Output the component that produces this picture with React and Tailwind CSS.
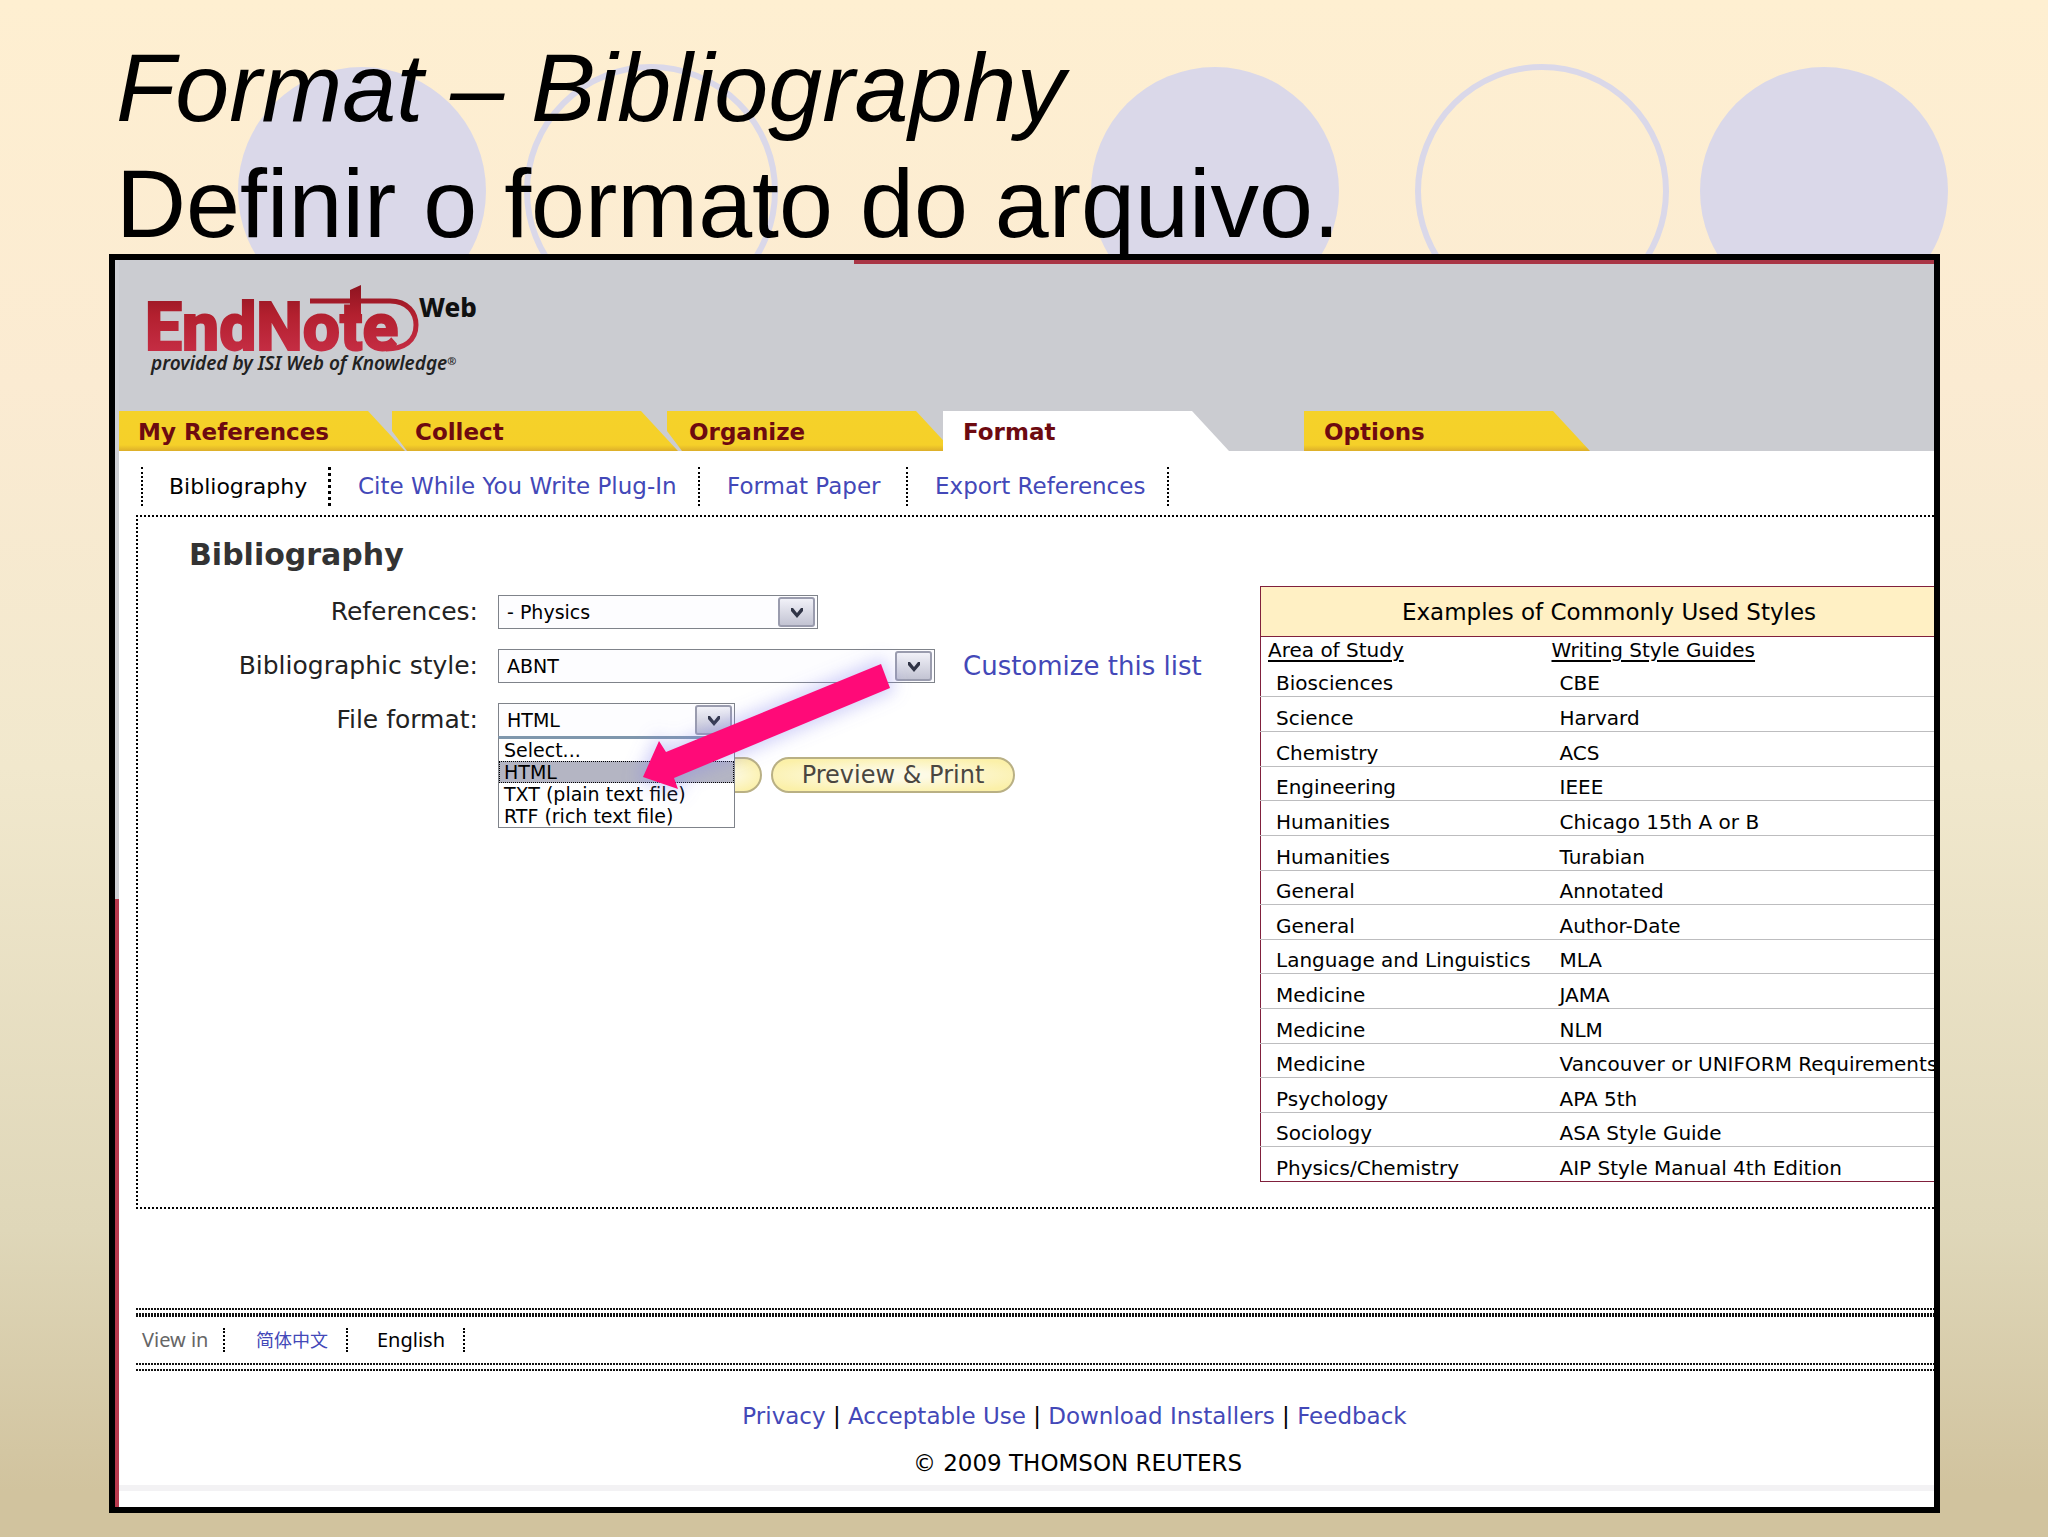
import React from "react";

const tabs = [
  { label: "My References", cls: "pl-[19px] [clip-path:polygon(0_0,249px_0,286px_100%,0_100%)]" },
  { label: "Collect", cls: "-ml-[13px] pl-[23px] [clip-path:polygon(0_0,249px_0,286px_100%,15px_100%,0_50%)]" },
  { label: "Organize", cls: "-ml-[11px] pl-[22px] [clip-path:polygon(0_0,249px_0,286px_100%,15px_100%,0_50%)]" },
  { label: "Format", active: true, cls: "-ml-[10px] pl-[20px] [clip-path:polygon(0_0,249px_0,286px_100%,0_100%)]" },
  { label: "Options", cls: "ml-[75px] pl-[20px] [clip-path:polygon(0_0,249px_0,286px_100%,0_100%)]" },
];

const styles = [
  ["Biosciences", "CBE"],
  ["Science", "Harvard"],
  ["Chemistry", "ACS"],
  ["Engineering", "IEEE"],
  ["Humanities", "Chicago 15th A or B"],
  ["Humanities", "Turabian"],
  ["General", "Annotated"],
  ["General", "Author-Date"],
  ["Language and Linguistics", "MLA"],
  ["Medicine", "JAMA"],
  ["Medicine", "NLM"],
  ["Medicine", "Vancouver or UNIFORM Requirements"],
  ["Psychology", "APA 5th"],
  ["Sociology", "ASA Style Guide"],
  ["Physics/Chemistry", "AIP Style Manual 4th Edition"],
];

const fileFormats = ["Select...", "HTML", "TXT (plain text file)", "RTF (rich text file)"];

function Circles() {
  return (
    <svg className="absolute left-0 top-0 h-[320px] w-full" viewBox="0 0 2048 320" preserveAspectRatio="xMinYMin slice" aria-hidden="true">
      <g fill="#dad8e9">
        <circle cx="362" cy="191" r="124" />
        <circle cx="1215" cy="191" r="124" />
        <circle cx="1824" cy="191" r="124" />
      </g>
      <g fill="none" stroke="#dad8e9" strokeWidth="6">
        <circle cx="651" cy="191" r="124" />
        <circle cx="1542" cy="191" r="124" />
      </g>
    </svg>
  );
}

function Logo() {
  return (
    <svg className="block" width="350" height="110" viewBox="140 280 350 110" role="img" aria-label="EndNote Web">
      <defs>
        <linearGradient id="red" x1="0" y1="285" x2="0" y2="352" gradientUnits="userSpaceOnUse">
          <stop offset="0" stopColor="#8e1420" />
          <stop offset="0.45" stopColor="#b3202f" />
          <stop offset="1" stopColor="#c52d44" />
        </linearGradient>
      </defs>
      <text x="145" y="350" fontFamily="Roboto,'Liberation Sans',sans-serif" fontWeight="800" fontSize="66" fill="url(#red)" stroke="url(#red)" strokeWidth="2">
        EndNote
      </text>
      <g fill="none" stroke="url(#red)">
        <path d="M310 301H390C408 301 416 313 416 325C416 341 404 349 386 349" strokeWidth="5" />
        <path d="M350 290L361 285V318H350Z" fill="url(#red)" stroke="none" />
      </g>
      <text x="419" y="317" fontFamily="'Noto Sans',sans-serif" fontWeight="800" fontSize="26" fill="#111">Web</text>
      <text x="151" y="370" fontFamily="'Noto Sans',sans-serif" fontWeight="600" fontStyle="italic" fontSize="19" fill="#222">
        provided by ISI Web of Knowledge<tspan fontSize="11" dy="-5">®</tspan>
      </text>
    </svg>
  );
}

function Select({ id, value, width, children }) {
  return (
    <div className={"relative " + width}>
      <select
        id={id}
        defaultValue={value}
        className="block h-[34px] w-full appearance-none border border-[#7f838a] bg-[#fdfdff] pl-2 text-[19px] leading-[32px] text-black"
      >
        <option>{value}</option>
      </select>
      <span className="pointer-events-none absolute right-[3px] top-[2px] flex h-[30px] w-[37px] items-center justify-center rounded-[3px] border-2 border-[#9a9cae] bg-linear-to-b from-[#f1f1f8] to-[#c3c4d3]">
        <svg width="14" height="11" viewBox="0 0 14 11" aria-hidden="true">
          <path d="M1 1V4L7 11L13 4V1H11L7 6L3 1Z" fill="#303446" />
        </svg>
      </span>
      {children}
    </div>
  );
}

function Rule({ className }) {
  return <div className={"bg-[repeating-linear-gradient(90deg,#111_0_2px,transparent_2px_3px)] " + className} />;
}

function Arrow() {
  return (
    <svg className="pointer-events-none absolute left-[461px] top-[123px] z-20" width="320" height="180" viewBox="0 0 320 180" aria-hidden="true">
      <defs>
        <filter id="glow" x="-20%" y="-20%" width="140%" height="150%">
          <feGaussianBlur stdDeviation="8" />
        </filter>
      </defs>
      <path d="M44 137L60 101L67 112L282 24L291 48L75 138L79 149Z" fill="#8080f0" fillOpacity="0.3" stroke="#8080f0" strokeOpacity="0.2" strokeWidth="14" strokeLinejoin="round" filter="url(#glow)" />
      <path d="M44 137L60 101L67 112L282 24L291 48L75 138L79 149Z" fill="#ff0a78" />
    </svg>
  );
}

const link = "text-[#4348b8]";
const pill =
  "h-[36px] rounded-full border-2 border-[#b9b084] bg-[radial-gradient(ellipse_at_center,#fdfae6_20%,#fbf0a8_85%)] text-[24px] leading-[32px] text-[#4a4640]";
const navItem = "flex h-[39px] items-center border-r-2 border-dotted border-black px-[27px]";

export default function App() {
  return (
    <div className="relative min-h-screen overflow-hidden bg-[linear-gradient(180deg,#feefd1_0%,#fbebd2_25%,#f1e8cd_50%,#dfd7b9_80%,#d1c39e_97%)] pb-6 font-['DejaVu_Sans','Noto_Sans_CJK_SC',sans-serif] text-black">
      <Circles />
      <h1 className="relative -mb-[8px] pl-[116px] pt-[30px] font-['Liberation_Sans',sans-serif] text-[97px] leading-[116px]">
        <em>Format – Bibliography</em>
        <br />
        Definir o formato do arquivo.
      </h1>

      <main className="relative ml-[109px] mr-[108px] flex overflow-hidden border-6 border-black bg-white">
        <div className="flex w-1 shrink-0 flex-col">
          <div className="h-[639px] bg-[#cfd0d5]" />
          <div className="flex-1 bg-[#b83a4e]" />
        </div>
        <div className="min-w-0 flex-1">
          <header className="bg-[#cbccd1]">
            <div className="ml-[735px] h-1 bg-[#a93545]" />
            <div className="h-[147px] pl-[21px] pt-[16px]">
              <Logo />
            </div>
            <nav className="flex" aria-label="Main">
              {tabs.map((t) => (
                <button
                  key={t.label}
                  className={
                    "h-10 w-[286px] shrink-0 text-left text-[23px] font-bold leading-[42px] text-[#6d0a10] " +
                    (t.active ? "relative bg-white " : "bg-[linear-gradient(180deg,#f5d229_0%,#f5d029_85%,#dcae2a_100%)] ") +
                    t.cls
                  }
                >
                  {t.label}
                </button>
              ))}
            </nav>
          </header>

          <nav className="ml-[22px] mt-4 flex whitespace-nowrap border-l-2 border-dotted border-black text-[23px]" aria-label="Format">
            <span className="flex h-[39px] w-[188px] items-center border-r-3 border-dotted border-black pl-[26px] text-[22px]">Bibliography</span>
            <a href="#cite" className={navItem + " w-[369px] " + link}>Cite While You Write Plug-In</a>
            <a href="#paper" className={navItem + " w-[208px] " + link}>Format Paper</a>
            <a href="#export" className={navItem + " w-[261px] " + link}>Export References</a>
          </nav>

          <section className="ml-[17px] mt-[9px] flex border-y-2 border-l-2 border-dotted border-black pb-[25px]">
            <form className="relative min-w-0 flex-1 text-[25px]" onSubmit={(e) => e.preventDefault()}>
              <h2 className="mb-5 mt-[18px] pl-[51px] text-[30px] font-bold leading-10 text-[#333]">Bibliography</h2>
              <div className="grid grid-cols-[340px_auto] items-center gap-5 text-[#222]">
                <label htmlFor="refs" className="text-right leading-[34px]">References:</label>
                <Select id="refs" value="- Physics" width="w-[320px]" />
                <label htmlFor="style" className="text-right leading-[34px]">Bibliographic style:</label>
                <div className="flex items-center gap-[28px]">
                  <Select id="style" value="ABNT" width="w-[437px]" />
                  <a href="#customize" className={"whitespace-nowrap text-[26px] leading-[34px] " + link}>Customize this list</a>
                </div>
                <label htmlFor="file" className="text-right leading-[34px]">File format:</label>
                <Select id="file" value="HTML" width="w-[237px]">
                  <ul role="listbox" aria-label="File format" className="absolute inset-x-0 top-[33px] z-10 border border-t-3 border-[#7f838a] border-t-[#7f97ad] bg-white text-[19px] leading-[22px] text-black">
                    {fileFormats.map((f) => (
                      <li
                        key={f}
                        role="option"
                        aria-selected={f === "HTML"}
                        className={
                          f === "HTML"
                            ? "bg-[#b4b5c3] pl-[5px] outline-1 -outline-offset-1 outline-dotted outline-black"
                            : "pl-[5px]"
                        }
                      >
                        {f}
                      </li>
                    ))}
                  </ul>
                </Select>
                <div className="col-start-2 flex gap-[9px] pl-[173px]">
                  <button aria-label="E-mail" className={pill + " w-[91px]"} />
                  <button className={pill + " w-[244px]"}>Preview &amp; Print</button>
                </div>
              </div>
              <Arrow />
            </form>

            <table
              aria-label="Writing style guides by area of study"
              className="-mr-[24px] mt-[69px] h-[596px] w-[698px] shrink-0 border-collapse whitespace-nowrap border border-[#80203c] text-[20px] leading-[26px]"
            >
              <thead>
                <tr>
                  <th colSpan={2} className="h-[50px] border border-[#80203c] bg-[#fff0c4] text-center text-[23px] font-normal">
                    Examples of Commonly Used Styles
                  </th>
                </tr>
                <tr>
                  <th className="h-[26px] w-[284px] pl-[7px] text-left font-normal underline underline-offset-3">Area of Study</th>
                  <th className="pl-[7px] text-left font-normal underline underline-offset-3">Writing Style Guides</th>
                </tr>
              </thead>
              <tbody>
                {styles.map(([area, guide], i) => (
                  <tr key={i} className="border-b border-[#bdbdbf] align-bottom last:border-[#80203c]">
                    <td className="pl-[15px]">{area}</td>
                    <td className="pl-[15px]">{guide}</td>
                  </tr>
                ))}
              </tbody>
            </table>
          </section>

          <footer>
            <div className="ml-[17px] mt-[99px]">
              <Rule className="h-[2px]" />
              <Rule className="mt-[3px] h-[4px]" />
              <div className="flex h-[46px] items-center font-['Noto_Sans','Noto_Sans_CJK_SC',sans-serif] text-[20px]">
                <span className="flex h-6 w-[89px] items-center border-r-2 border-dotted border-black pl-[6px] text-[#666]">View in</span>
                <a href="#zh" className={"flex h-6 w-[123px] items-center border-r-2 border-dotted border-black pl-[31px] text-[18px] " + link}>简体中文</a>
                <span className="flex h-6 w-[117px] items-center border-r-2 border-dotted border-black pl-[29px]">English</span>
              </div>
              <Rule className="h-[2px]" />
              <Rule className="mt-[4px] h-[2px]" />
            </div>
            <div className="mt-[27px] pl-[96px] text-center text-[23px] leading-[36px]">
              <a href="#privacy" className={link}>Privacy</a> | <a href="#use" className={link}>Acceptable Use</a> |{" "}
              <a href="#installers" className={link}>Download Installers</a> | <a href="#feedback" className={link}>Feedback</a>
            </div>
            <p className="mt-[10px] pl-[102px] text-center text-[23px] leading-[38px]">© 2009 THOMSON REUTERS</p>
            <div className="mb-4 mt-[3px] h-[6px] bg-[#f3f2f4]" />
          </footer>
        </div>
      </main>
    </div>
  );
}
